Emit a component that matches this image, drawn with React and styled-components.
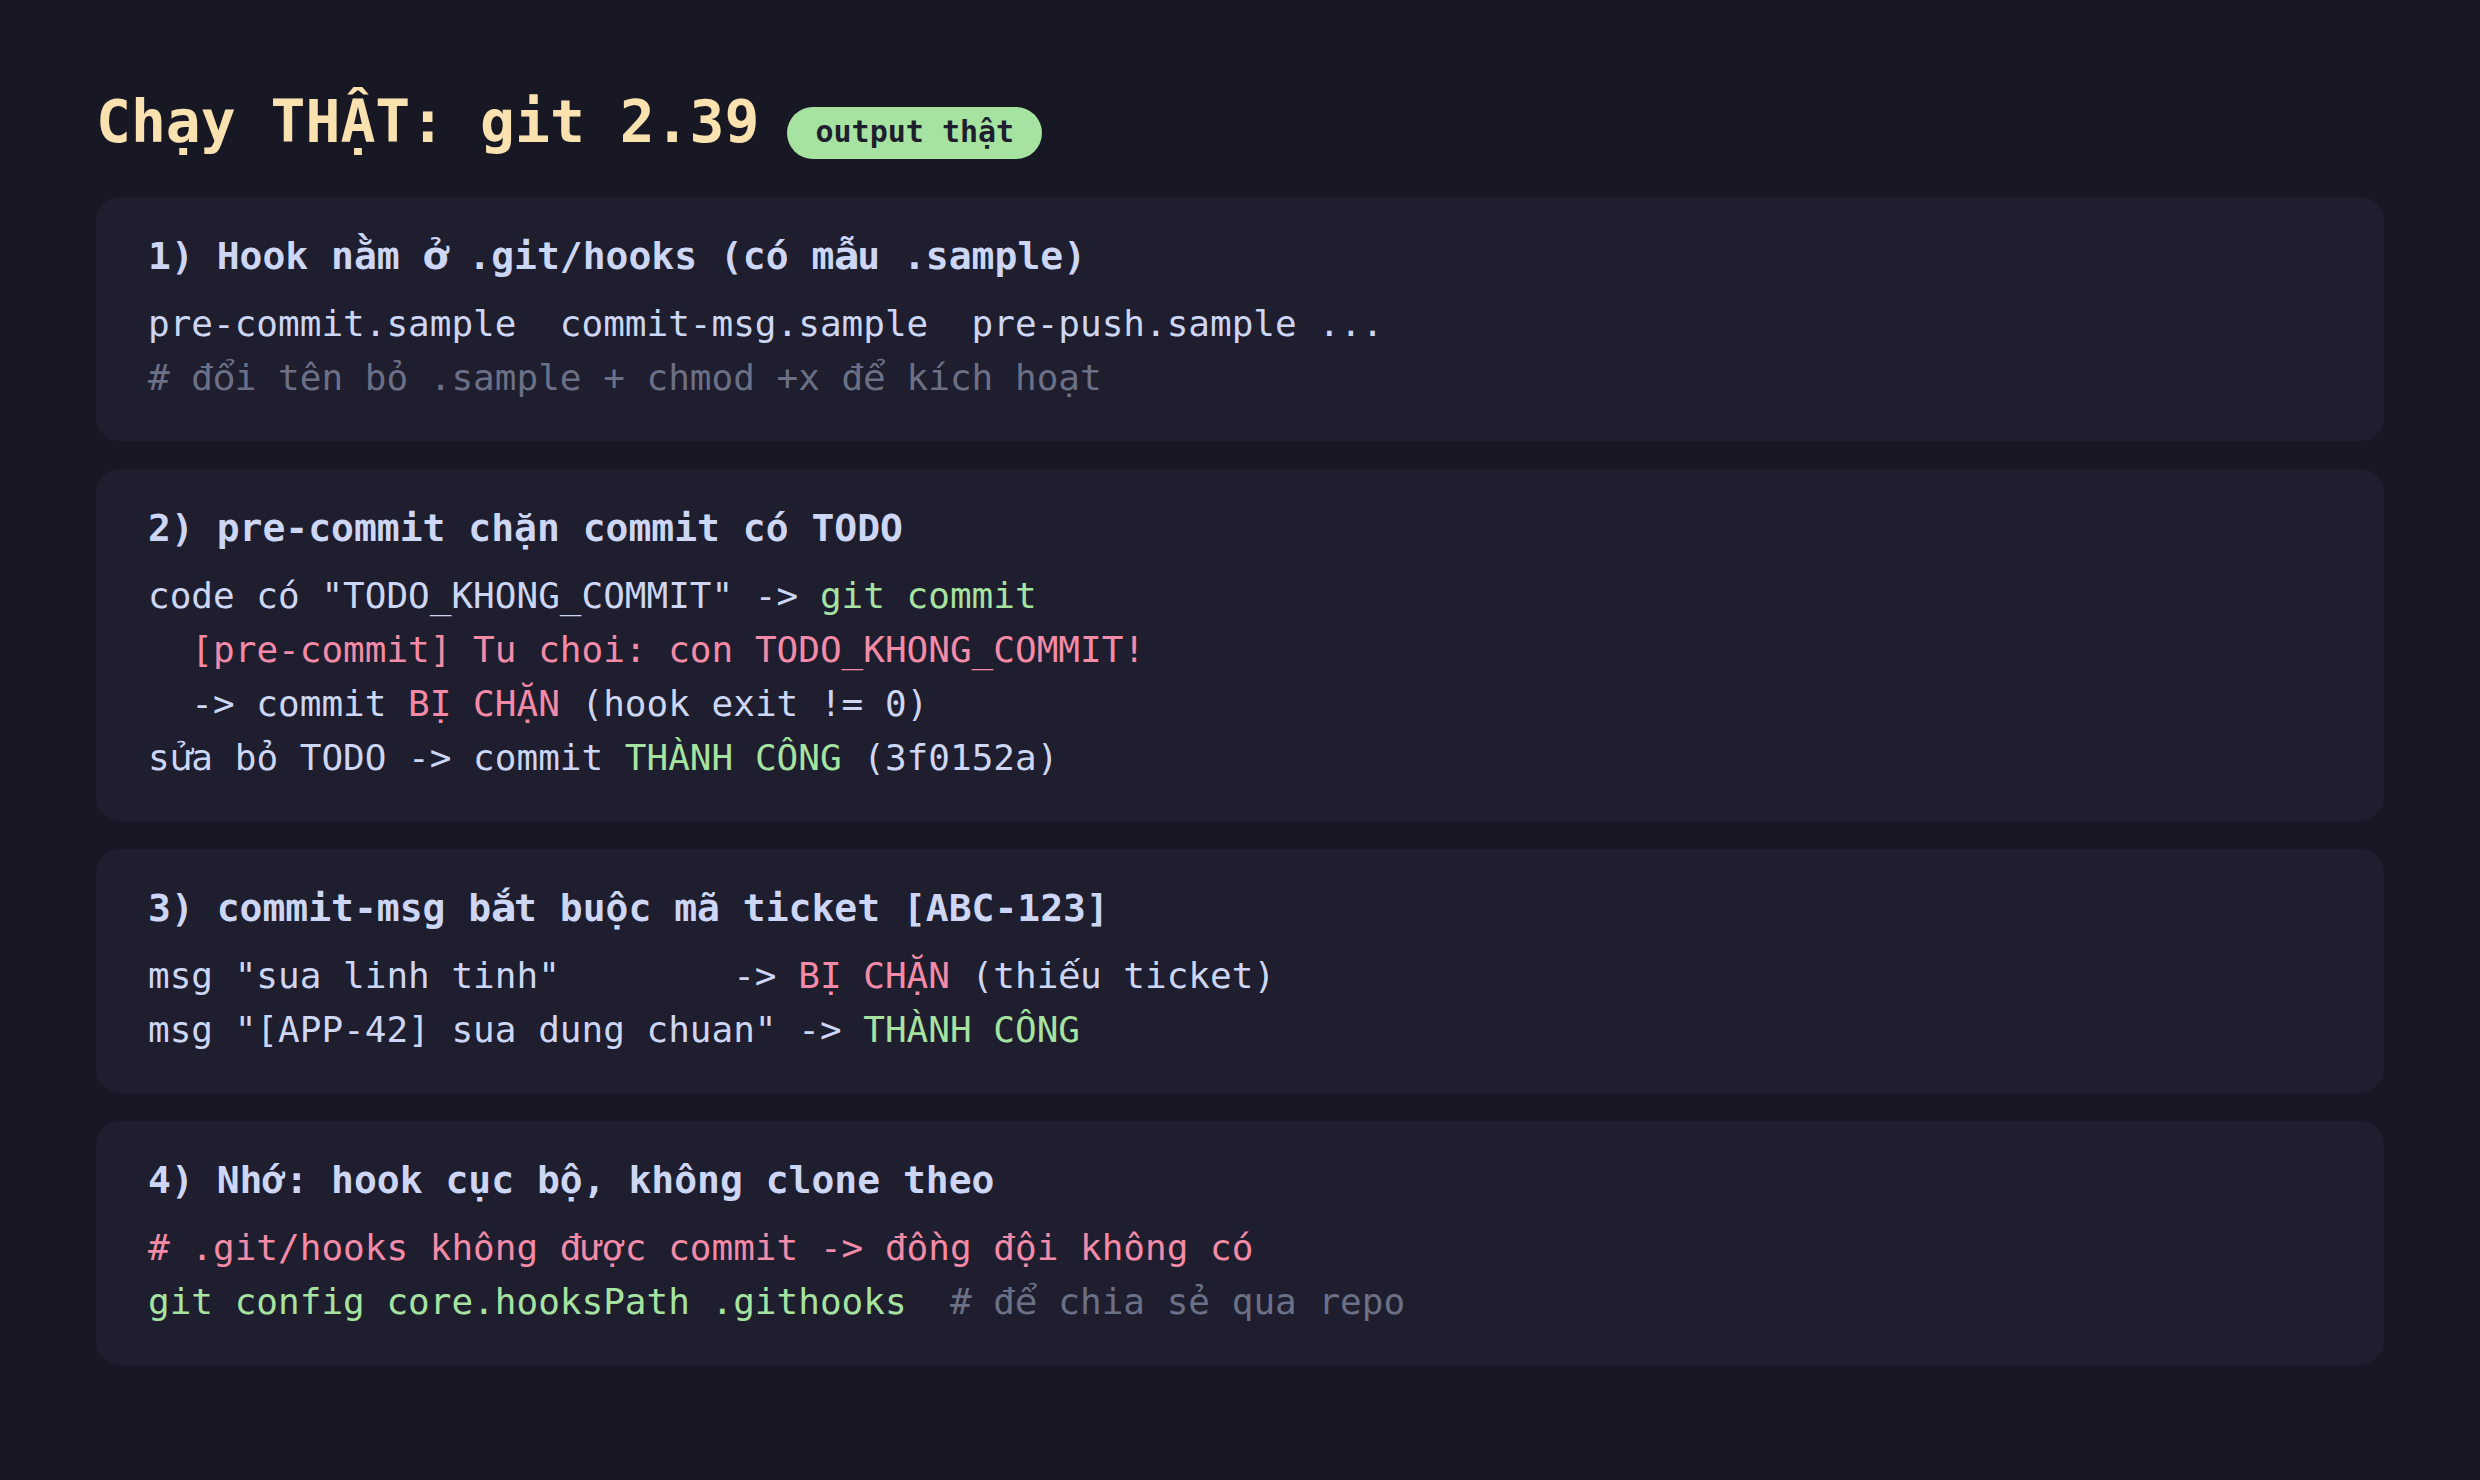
import styled, { createGlobalStyle } from "styled-components"

const GlobalStyle = createGlobalStyle`
  html, body {
    margin: 0;
    background: #181825;
  }
  body {
    font-family: "DejaVu Sans Mono", "Liberation Mono", monospace;
    color: #cdd6f4;
  }
`

const tones = {
  text: "#cdd6f4",
  ok: "#a6e3a1",
  bad: "#f38ba8",
  dim: "#6c7086",
}

// letters the mono face lacks precomposed; take them from DejaVu Sans in a mono cell
const MISSING = /([ởẫổểắếửỞẪỔỂẮẾỬ])/

const Glyph = styled.span`
  display: inline-block;
  width: 0.602em;
  text-align: center;
  font-family: "DejaVu Sans", sans-serif;
`

const fix = (s) =>
  s
    .normalize("NFC")
    .split(MISSING)
    .map((part, i) => (i % 2 ? <Glyph key={i}>{part}</Glyph> : part))

const Page = styled.main`
  padding: 88px 96px 48px;
  display: flex;
  flex-direction: column;
`

const Header = styled.header`
  display: flex;
  align-items: baseline;
  gap: 28px;
  margin-bottom: 38px;
`

const Title = styled.h1`
  margin: 0;
  font-size: 58px;
  line-height: 1.2;
  font-weight: 700;
  color: #f9e2af;
`

const Badge = styled.span`
  font-size: 30px;
  font-weight: 700;
  color: #1e1e2e;
  background: #a6e3a1;
  padding: 7px 28px 10px;
  border-radius: 999px;
`

const List = styled.div`
  display: flex;
  flex-direction: column;
  gap: 28px;
`

const Card = styled.section`
  background: #1e1e2e;
  border-radius: 24px;
  padding: 37px 52px 36px;
`

const CardTitle = styled.h2`
  margin: 0 0 19px;
  font-size: 38px;
  font-weight: 700;
  color: #cdd6f4;
`

const Code = styled.div`
  font-size: 36px;
  line-height: 54px;
  white-space: pre;
`

const Tok = styled.span`
  color: ${(props) => tones[props.tone] || tones.text};
`

const sections = [
  {
    title: "1) Hook nằm ở .git/hooks (có mẫu .sample)",
    lines: [
      [["pre-commit.sample  commit-msg.sample  pre-push.sample ..."]],
      [["# đổi tên bỏ .sample + chmod +x để kích hoạt", "dim"]],
    ],
  },
  {
    title: "2) pre-commit chặn commit có TODO",
    lines: [
      [['code có "TODO_KHONG_COMMIT" -> '], ["git commit", "ok"]],
      [["  "], ["[pre-commit] Tu choi: con TODO_KHONG_COMMIT!", "bad"]],
      [["  -> commit "], ["BỊ CHẶN", "bad"], [" (hook exit != 0)"]],
      [["sửa bỏ TODO -> commit "], ["THÀNH CÔNG", "ok"], [" (3f0152a)"]],
    ],
  },
  {
    title: "3) commit-msg bắt buộc mã ticket [ABC-123]",
    lines: [
      [['msg "sua linh tinh"        -> '], ["BỊ CHẶN", "bad"], [" (thiếu ticket)"]],
      [['msg "[APP-42] sua dung chuan" -> '], ["THÀNH CÔNG", "ok"]],
    ],
  },
  {
    title: "4) Nhớ: hook cục bộ, không clone theo",
    lines: [
      [["# .git/hooks không được commit -> đồng đội không có", "bad"]],
      [["git config core.hooksPath .githooks", "ok"], ["  # để chia sẻ qua repo", "dim"]],
    ],
  },
]

function App() {
  return (
    <>
      <GlobalStyle />
      <Page>
        <Header>
          <Title>{fix("Chạy THẬT: git 2.39")}</Title>
          <Badge>{fix("output thật")}</Badge>
        </Header>
        <List>
          {sections.map((s) => (
            <Card key={s.title}>
              <CardTitle>{fix(s.title)}</CardTitle>
              <Code>
                {s.lines.map((line, i) => (
                  <div key={i}>
                    {line.map(([text, tone], j) => (
                      <Tok key={j} tone={tone}>{fix(text)}</Tok>
                    ))}
                  </div>
                ))}
              </Code>
            </Card>
          ))}
        </List>
      </Page>
    </>
  )
}

export default App
